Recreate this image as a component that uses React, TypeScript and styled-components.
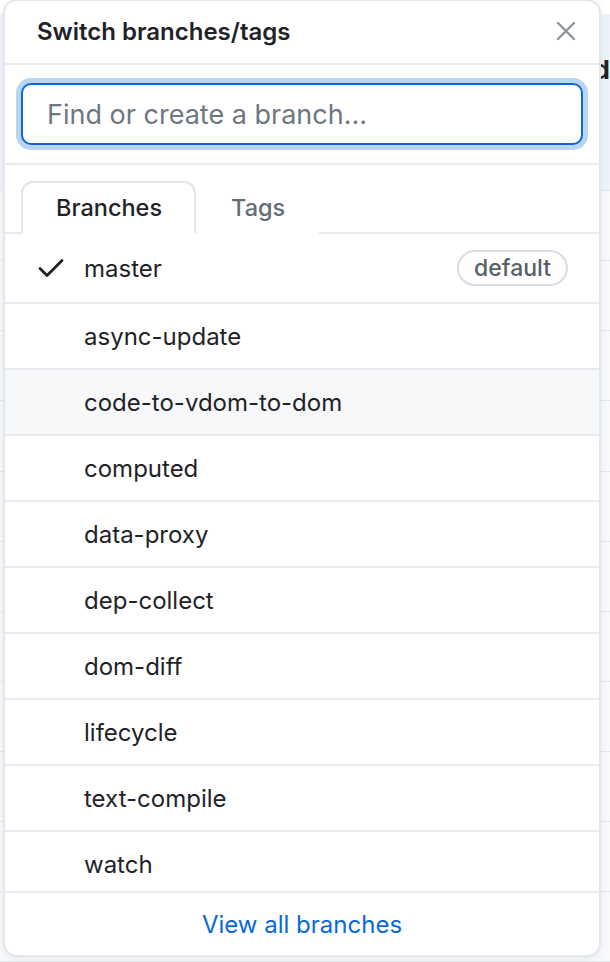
import React from "react";
import styled, { createGlobalStyle } from "styled-components";

const Global = createGlobalStyle`
  html, body { margin: 0; padding: 0; background: #ffffff; }
  body { font-family: Inter, "Noto Sans", "Liberation Sans", sans-serif; -webkit-font-smoothing: antialiased; }
  * { box-sizing: border-box; }
`;

const Stage = styled.div`
  position: relative;
  width: 610px;
  height: 962px;
  overflow: hidden;
  background: #ffffff;
`;

const Backdrop = styled.div`
  display: flex;
  flex-direction: column;
  height: 100%;
  padding-top: 14px;
`;

const BackHeader = styled.div`
  height: 183px;
  background: #eef3f9;
  border-bottom: 1px solid #dfe4ea;
  display: flex;
  justify-content: flex-end;
  padding-top: 40px;
  font-size: 26px;
  font-weight: 700;
  color: #1f2328;
  overflow: hidden;
  white-space: nowrap;
`;

const BackRow = styled.div`
  height: 73px;
  border-bottom: 1px solid #e3e7eb;
  background: #f7f9fb;
`;

const Panel = styled.div`
  position: absolute;
  left: 3px;
  top: -1px;
  width: 598px;
  height: 958px;
  background: #ffffff;
  border: 2px solid #e3e6ea;
  border-radius: 14px;
  box-shadow: 0 2px 6px rgba(140, 149, 159, 0.15);
  display: flex;
  flex-direction: column;
  overflow: hidden;
`;

const Header = styled.div`
  height: 64px;
  flex: none;
  display: flex;
  align-items: center;
  justify-content: space-between;
  padding: 0 22px 2px 32px;
  border-bottom: 2px solid #e8eaed;
`;

const Title = styled.h2`
  margin: 0;
  font-size: 24px;
  font-weight: 600;
  color: #1f2328;
  letter-spacing: 0;
`;

const Close = styled.button`
  border: 0;
  background: none;
  padding: 0;
  width: 22px;
  height: 22px;
  display: flex;
  align-items: center;
  justify-content: center;
  color: #8c959f;
`;

const FilterWrap = styled.div`
  flex: none;
  padding: 18px 16px;
  border-bottom: 2px solid #e8eaed;
`;

const Input = styled.input`
  display: block;
  width: 100%;
  height: 62px;
  border: 2px solid #0969da;
  border-radius: 10px;
  box-shadow: 0 0 0 5px #bad4f3;
  padding: 0 24px;
  font-family: inherit;
  font-size: 27px;
  color: #1f2328;
  outline: none;
  &::placeholder { color: #6e7781; }
`;

const Tabs = styled.div`
  flex: none;
  display: flex;
  padding: 16px 0 0 16px;
  border-bottom: 2px solid #e8eaed;
`;

const Tab = styled.div<{ $active?: boolean }>`
  height: 53px;
  margin-bottom: -2px;
  padding: 0 32px 0 33px;
  display: flex;
  align-items: center;
  font-size: 23.5px;
  font-weight: 500;
  color: ${(p) => (p.$active ? "#1f2328" : "#656d76")};
  background: #ffffff;
  border: 2px solid ${(p) => (p.$active ? "#e3e6ea" : "transparent")};
  border-bottom-color: ${(p) => (p.$active ? "#ffffff" : "transparent")};
  border-radius: 12px 12px 0 0;
`;

const List = styled.div`
  flex: none;
  height: 657px;
  overflow: hidden;
`;

const Row = styled.div<{ $tall?: boolean; $hover?: boolean }>`
  height: ${(p) => (p.$tall ? "70px" : "66px")};
  display: flex;
  align-items: center;
  padding: 0 31px 0 32px;
  border-bottom: 2px solid #e8eaed;
  background: ${(p) => (p.$hover ? "#f6f8fa" : "#ffffff")};
`;

const CheckSlot = styled.div`
  width: 47px;
  flex: none;
  display: flex;
  align-items: center;
  color: #1f2328;
`;

const Name = styled.span`
  flex: 1;
  font-size: 24px;
  color: #1f2328;
`;

const Badge = styled.span`
  height: 36px;
  padding: 0 15px;
  display: inline-flex;
  align-items: center;
  border: 2px solid #d8dde3;
  border-radius: 18px;
  font-size: 23px;
  font-weight: 500;
  color: #57606a;
`;

const Footer = styled.div`
  flex: 1;
  display: flex;
  align-items: center;
  justify-content: center;
  border-top: 2px solid #e8eaed;
`;

const FooterLink = styled.a`
  font-size: 24px;
  color: #0969da;
  text-decoration: none;
`;

const branches = [
  "master",
  "async-update",
  "code-to-vdom-to-dom",
  "computed",
  "data-proxy",
  "dep-collect",
  "dom-diff",
  "lifecycle",
  "text-compile",
  "watch",
];

export default function App() {
  return (
    <Stage>
      <Global />
      <Backdrop>
        <BackHeader>
          <span>d</span>
        </BackHeader>
        {Array.from({ length: 11 }).map((_, i) => (
          <BackRow key={i} />
        ))}
      </Backdrop>
      <Panel>
        <Header>
          <Title>Switch branches/tags</Title>
          <Close aria-label="Close">
            <svg width="20" height="20" viewBox="0 0 20 20" fill="none">
              <path d="M2 2 L18 18 M18 2 L2 18" stroke="currentColor" strokeWidth="2.4" strokeLinecap="round" />
            </svg>
          </Close>
        </Header>
        <FilterWrap>
          <Input placeholder="Find or create a branch..." />
        </FilterWrap>
        <Tabs>
          <Tab $active>Branches</Tab>
          <Tab>Tags</Tab>
        </Tabs>
        <List>
          {branches.map((b, i) => (
            <Row key={b} $tall={i === 0} $hover={b === "code-to-vdom-to-dom"}>
              <CheckSlot>
                {i === 0 && (
                  <svg width="28" height="22" viewBox="0 0 28 22" fill="none">
                    <path d="M3 11.5 L10 18.5 L25 3.5" stroke="currentColor" strokeWidth="2.8" strokeLinecap="round" strokeLinejoin="round" />
                  </svg>
                )}
              </CheckSlot>
              <Name>{b}</Name>
              {i === 0 && <Badge>default</Badge>}
            </Row>
          ))}
        </List>
        <Footer>
          <FooterLink href="#">View all branches</FooterLink>
        </Footer>
      </Panel>
    </Stage>
  );
}
